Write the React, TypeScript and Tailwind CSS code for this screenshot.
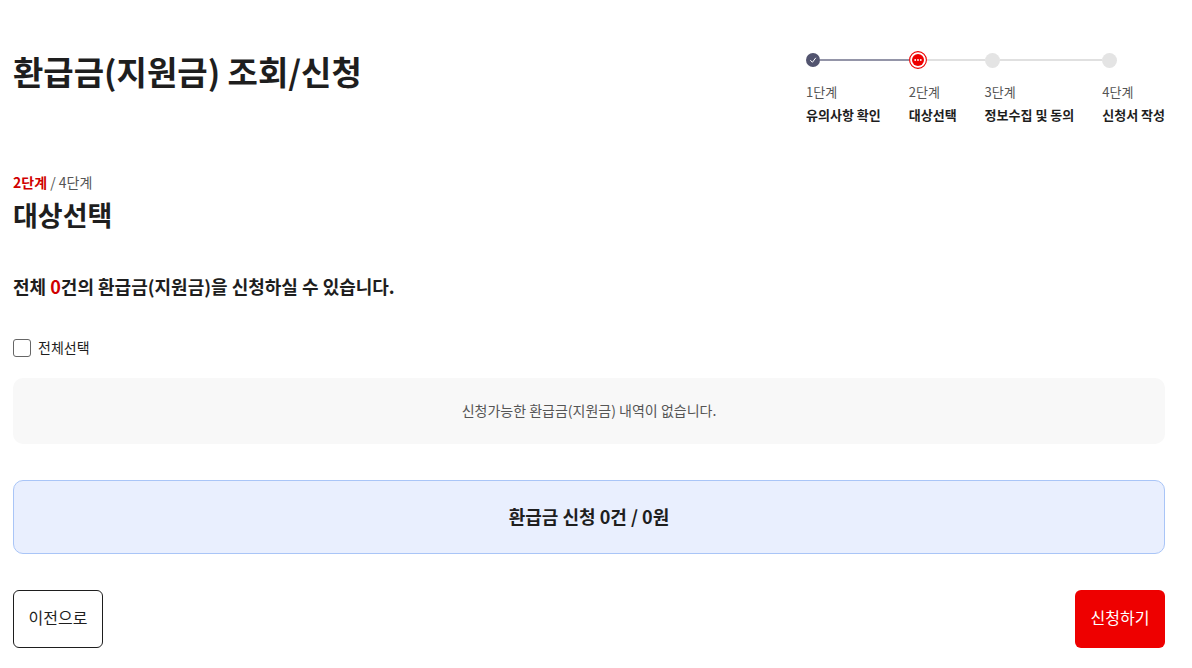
import React, { useState } from 'react';

type StepState = 'done' | 'current' | 'todo';

const steps: { no: string; title: string; state: StepState }[] = [
  { no: '1단계', title: '유의사항 확인', state: 'done' },
  { no: '2단계', title: '대상선택', state: 'current' },
  { no: '3단계', title: '정보수집 및 동의', state: 'todo' },
  { no: '4단계', title: '신청서 작성', state: 'todo' },
];

const Marker = ({ state }: { state: StepState }) => {
  if (state === 'done') {
    return (
      <svg className="w-3.5 h-3.5 shrink-0" viewBox="0 0 14 14" aria-hidden="true">
        <circle cx="7" cy="7" r="7" fill="#52546f" />
        <path d="M4.3 7.2 6.4 9.3 9.8 4.8" fill="none" stroke="#fff" strokeWidth="1" />
      </svg>
    );
  }
  if (state === 'current') {
    return (
      <svg className="w-[18px] h-[18px] shrink-0" viewBox="0 0 18 18" aria-hidden="true">
        <circle cx="9" cy="9" r="8.4" fill="#fff" stroke="#ee0000" strokeWidth="1.1" />
        <circle cx="9" cy="9" r="6" fill="#ee0000" />
        <circle cx="6.2" cy="9" r="0.9" fill="#fff" />
        <circle cx="9" cy="9" r="0.9" fill="#fff" />
        <circle cx="11.8" cy="9" r="0.9" fill="#fff" />
      </svg>
    );
  }
  return <span className="w-[15px] h-[15px] shrink-0 rounded-full bg-[#e4e4e4]" />;
};

const Stepper = () => (
  <ol className="flex gap-7">
    {steps.map((step, index) => (
      <li key={step.no} aria-current={step.state === 'current' ? 'step' : undefined}>
        <div className="flex items-center h-[18px] -mr-7">
          <Marker state={step.state} />
          {index < steps.length - 1 && (
            <span className={`flex-1 h-0.5 ${step.state === 'done' ? 'bg-[#9495a8]' : 'bg-[#e0e0e0]'}`} />
          )}
        </div>
        <p className="mt-3 text-[13px] leading-[22px] text-[#555]">{step.no}</p>
        <p className="text-[13px] leading-6 font-bold whitespace-nowrap">{step.title}</p>
      </li>
    ))}
  </ol>
);

const App = () => {
  const [checked, setChecked] = useState(false);

  return (
    <main className="bg-white pl-[13px] pr-[27px] pt-[51px] pb-5 text-[#1e1e1e] font-['Noto_Sans_CJK_KR',sans-serif]">
      <header className="flex justify-between items-start">
        <h1 className="text-[33px] leading-10 font-bold">환급금(지원금) 조회/신청</h1>
        <Stepper />
      </header>

      <section className="mt-[43px]">
        <p className="text-sm leading-6 text-[#555]">
          <strong className="font-bold text-[#d00000]">2단계</strong> / 4단계
        </p>
        <h2 className="text-[27px] leading-[42px] font-bold">대상선택</h2>
      </section>

      <p className="mt-9 text-lg leading-7 font-bold">
        전체 <span className="text-[#d00000]">0</span>건의 환급금(지원금)을 신청하실 수 있습니다.
      </p>

      <div className="mt-[39px] flex items-start gap-[7px]">
        <input
          id="check-all"
          type="checkbox"
          checked={checked}
          onChange={(e) => setChecked(e.target.checked)}
          className="appearance-none w-[18px] h-[18px] rounded-[3px] border border-[#666] bg-white checked:bg-[#ee0000]"
        />
        <label htmlFor="check-all" className="text-sm leading-4">전체선택</label>
      </div>

      <div className="mt-[21px] rounded-[10px] bg-[#f8f8f8] pt-[21px] pb-[23px] text-center text-sm leading-[22px] text-[#555]">
        신청가능한 환급금(지원금) 내역이 없습니다.
      </div>

      <div className="mt-9 rounded-[10px] border border-[#a9c5f7] bg-[#e9effe] pt-[21px] pb-[23px] text-center text-lg leading-7 font-bold">
        환급금 신청 0건 / 0원
      </div>

      <div className="mt-9 flex justify-between">
        <button type="button" className="w-[90px] h-[58px] pb-1 rounded-md border border-[#1e1e1e] bg-white text-base">
          이전으로
        </button>
        <button type="button" className="w-[90px] h-[58px] pb-1 rounded-md bg-[#ee0000] text-base text-white">
          신청하기
        </button>
      </div>
    </main>
  );
};

export default App;
